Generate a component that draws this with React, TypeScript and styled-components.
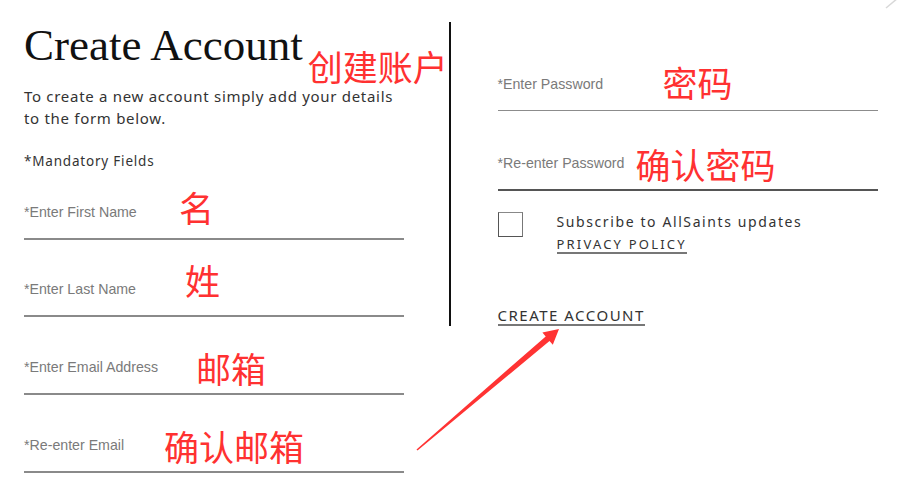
import styled, { createGlobalStyle } from "styled-components";

const GlobalStyle = createGlobalStyle`
  html, body {
    margin: 0;
    padding: 0;
    background: #ffffff;
  }
  body {
    font-family: "Noto Sans", "Liberation Sans", sans-serif;
  }
`;

const Page = styled.div`
  position: relative;
  width: 900px;
  height: 502px;
  overflow: hidden;
  display: flex;
  align-items: flex-start;
  padding-left: 24px;
  box-sizing: border-box;
`;

const Column = styled.div<{ $top: number }>`
  width: 380px;
  flex: none;
  padding-top: ${({ $top }) => $top}px;
  display: flex;
  flex-direction: column;
`;

const Divider = styled.div`
  flex: none;
  width: 1.5px;
  height: 304px;
  margin: 22px 47px 0 45px;
  background: #111;
`;

const TitleRow = styled.div`
  display: flex;
  align-items: flex-start;
  gap: 5px;
`;

const Title = styled.h1`
  margin: 0;
  font-family: "Liberation Serif", "Times New Roman", serif;
  font-weight: 400;
  font-size: 45px;
  line-height: 50px;
  color: #111;
  white-space: nowrap;
`;

const Note = styled.span<{ $top?: number }>`
  font-family: "Noto Sans CJK SC", "Noto Sans", sans-serif;
  font-size: 35px;
  line-height: 35px;
  color: #ff3131;
  white-space: nowrap;
  margin-top: ${({ $top }) => $top ?? 0}px;
`;

const Intro = styled.p`
  margin: 2px 0 0;
  font-size: 15px;
  line-height: 22px;
  letter-spacing: 0.7px;
  color: #333;
`;

const Mandatory = styled.p`
  margin: 22px 0 0;
  font-size: 13.5px;
  line-height: 20px;
  letter-spacing: 0.8px;
  color: #333;
`;

const Field = styled.div<{ $gap: number; $line: number; $tone: string }>`
  display: grid;
  grid-template-columns: 1fr;
  grid-template-rows: 44px;
  margin-top: ${({ $gap }) => $gap}px;
  border-bottom: ${({ $line, $tone }) => `${$line}px solid ${$tone}`};
`;

const Label = styled.span`
  grid-area: 1 / 1;
  align-self: end;
  justify-self: start;
  margin-bottom: 18px;
  font-family: "Liberation Sans", Arial, sans-serif;
  font-size: 14.2px;
  line-height: 16px;
  color: #7a7a7a;
`;

const FieldNote = styled(Note)<{ $x: number; $bottom: number }>`
  grid-area: 1 / 1;
  align-self: end;
  justify-self: start;
  margin-left: ${({ $x }) => $x}px;
  margin-bottom: ${({ $bottom }) => $bottom}px;
`;

const OptIn = styled.div`
  display: flex;
  align-items: flex-start;
  gap: 34px;
  margin-top: 21px;
`;

const Box = styled.div`
  width: 25px;
  height: 25px;
  box-sizing: border-box;
  border: 1.5px solid #555;
  border-top-color: #888;
  border-right-color: #777;
  flex: none;
`;

const OptText = styled.div`
  display: flex;
  flex-direction: column;
  align-items: flex-start;
`;

const Subscribe = styled.span`
  font-size: 14px;
  line-height: 20px;
  letter-spacing: 1.6px;
  color: #333;
`;

const TextLink = styled.a<{ $size: number; $lh: number; $gap: number; $track: number }>`
  display: inline-block;
  margin-top: ${({ $gap }) => $gap}px;
  font-size: ${({ $size }) => $size}px;
  line-height: ${({ $lh }) => $lh}px;
  letter-spacing: ${({ $track }) => $track}px;
  text-transform: uppercase;
  color: #333;
  text-decoration: none;
  border-bottom: 2px solid #777;
  align-self: flex-start;
`;

const Overlay = styled.svg`
  position: absolute;
  inset: 0;
  pointer-events: none;
`;

const leftFields = [
  { label: "*Enter First Name", note: "名", x: 155, bottom: 14, gap: 23 },
  { label: "*Enter Last Name", note: "姓", x: 161, bottom: 18, gap: 31 },
  { label: "*Enter Email Address", note: "邮箱", x: 172, bottom: 8, gap: 32 },
  { label: "*Re-enter Email", note: "确认邮箱", x: 140, bottom: 8, gap: 32 },
];

const rightFields = [
  { label: "*Enter Password", note: "密码", x: 165, bottom: 11, gap: 0, line: 1, tone: "#8c8c8c" },
  { label: "*Re-enter Password", note: "确认密码", x: 138, bottom: 8, gap: 34, line: 2, tone: "#555" },
];

export default function App() {
  return (
    <>
      <GlobalStyle />
      <Page>
        <Column $top={20}>
          <TitleRow>
            <Title>Create Account</Title>
            <Note $top={28}>创建账户</Note>
          </TitleRow>
          <Intro>
            To create a new account simply add your details
            <br />
            to the form below.
          </Intro>
          <Mandatory>*Mandatory Fields</Mandatory>
          {leftFields.map((f) => (
            <Field key={f.label} $gap={f.gap} $line={2} $tone="#8a8a8a">
              <Label>{f.label}</Label>
              <FieldNote $x={f.x} $bottom={f.bottom}>
                {f.note}
              </FieldNote>
            </Field>
          ))}
        </Column>
        <Divider />
        <Column $top={66}>
          {rightFields.map((f) => (
            <Field key={f.label} $gap={f.gap} $line={f.line} $tone={f.tone}>
              <Label>{f.label}</Label>
              <FieldNote $x={f.x} $bottom={f.bottom}>
                {f.note}
              </FieldNote>
            </Field>
          ))}
          <OptIn>
            <Box />
            <OptText>
              <Subscribe>Subscribe to AllSaints updates</Subscribe>
              <TextLink href="#" $size={13} $lh={16} $gap={4} $track={2.2}>
                Privacy Policy
              </TextLink>
            </OptText>
          </OptIn>
          <TextLink href="#" $size={15} $lh={18} $gap={52} $track={1.5}>
            Create Account
          </TextLink>
        </Column>
        <Overlay width="900" height="502" viewBox="0 0 900 502">
          <polygon
            points="417.5,450.6 549.5,341 552.8,344.8 559,329 542.4,332.6 545.7,336.4 416.5,449.4"
            fill="#ff3333"
          />
          <line x1="886" y1="8" x2="898" y2="-2" stroke="#d8d8d8" strokeWidth="1.5" />
        </Overlay>
      </Page>
    </>
  );
}
